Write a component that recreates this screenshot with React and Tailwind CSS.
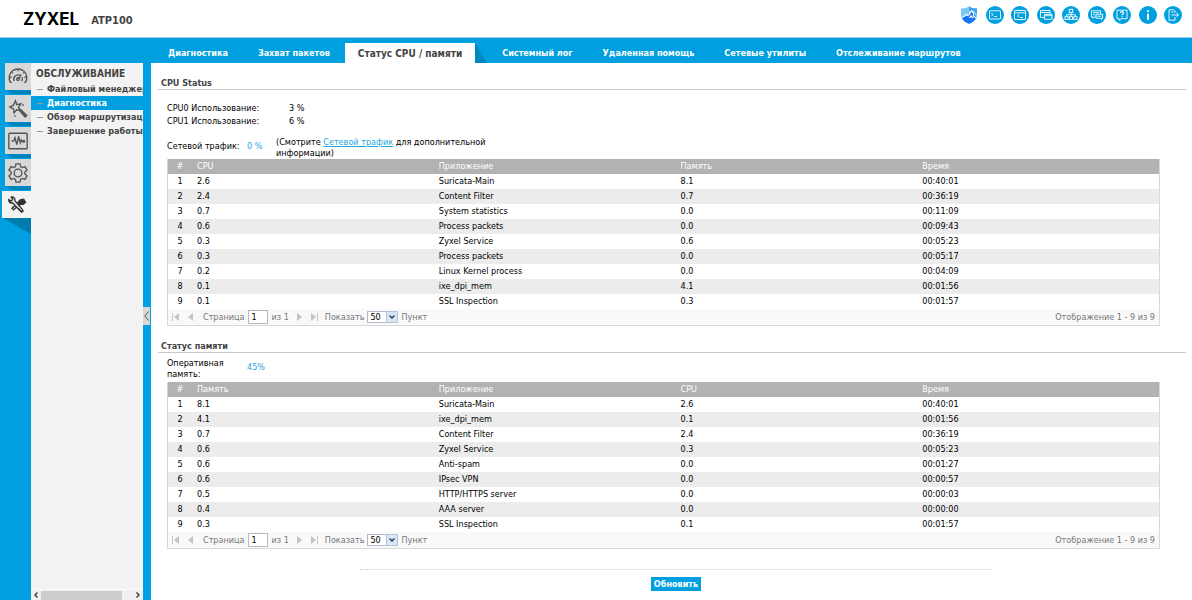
import React, { useState } from "react";

const cpuRows = [
    ["2.6", "Suricata-Main", "8.1", "00:40:01"],
    ["2.4", "Content Filter", "0.7", "00:36:19"],
    ["0.7", "System statistics", "0.0", "00:11:09"],
    ["0.6", "Process packets", "0.0", "00:09:43"],
    ["0.3", "Zyxel Service", "0.6", "00:05:23"],
    ["0.3", "Process packets", "0.0", "00:05:17"],
    ["0.2", "Linux Kernel process", "0.0", "00:04:09"],
    ["0.1", "ixe_dpi_mem", "4.1", "00:01:56"],
    ["0.1", "SSL Inspection", "0.3", "00:01:57"],
]

const memoryRows = [
    ["8.1", "Suricata-Main", "2.6", "00:40:01"],
    ["4.1", "ixe_dpi_mem", "0.1", "00:01:56"],
    ["0.7", "Content Filter", "2.4", "00:36:19"],
    ["0.6", "Zyxel Service", "0.3", "00:05:23"],
    ["0.6", "Anti-spam", "0.0", "00:01:27"],
    ["0.6", "IPsec VPN", "0.0", "00:00:57"],
    ["0.5", "HTTP/HTTPS server", "0.0", "00:00:03"],
    ["0.4", "AAA server", "0.0", "00:00:00"],
    ["0.3", "SSL Inspection", "0.1", "00:01:57"],
]

const tabs = [
    "Диагностика",
    "Захват пакетов",
    "Статус CPU / памяти",
    "Системный лог",
    "Удаленная помощь",
    "Сетевые утилиты",
    "Отслеживание маршрутов",
]

const menu = ["Файловый менеджер", "Диагностика", "Обзор маршрутизации", "Завершение работы"]

const headerIcons = [
    { name: "CLI", icon: <><rect x="3.5" y="4.8" width="11" height="8.2" rx="0.5" /><path d="M5.3 7l1.8 1.500L5.300 10M8 10.500h3" /></> },
    { name: "Web Console", icon: <><rect x="3.5" y="4.5" width="11" height="9" rx="0.5" /><path d="M3.500 6.800h11M8.300 8.300L6.500 9.800l1.800 1.500M9.300 11.500h2.500" /></> },
    { name: "Reference", icon: <><path d="M7.500 11.500h-4v-7h9.500v3.500M3.500 6.500h9.500" /><path d="M7.500 8.300h7.500v5H7.500zM7.500 9.700h7.500" /></> },
    { name: "Site Map", icon: <><rect x="7.200" y="3.300" width="3.600" height="3.200" /><rect x="3" y="10.700" width="3.200" height="2.800" /><rect x="7.400" y="10.700" width="3.200" height="2.800" /><rect x="11.800" y="10.700" width="3.200" height="2.800" /><path d="M9 6.500v4.200M4.600 10.700V8.700h8.800v2" /></> },
    { name: "Forum", icon: <><path d="M7.500 11H6l-1.200 1.300V11H3.500V4.800h9V8" /><path d="M5 6.700h6M5 8.700h2M8 8.200h6.700v4h-1.200v1.300L12.200 12.200H8zM9.300 10.200h4" /></> },
    { name: "Help", icon: <><path d="M4 4.200h10v8.500H8.200l-2 1.800v-1.800H4z" /><path strokeWidth="1.200" d="M7.500 7c0-1.800 3-1.800 3 0 0 1-1.500 1-1.500 2.200M9 10.300v1" /></> },
    { name: "About", icon: <><path strokeWidth="2" d="M9 7.500v6.200M9 4.200v1.900" /></> },
    { name: "Logout", icon: <><path d="M11 7V5L9.500 3.800H5v10.400h6V11M7.500 9h6.800M12.300 7L14.500 9l-2.200 2M7 6h2.500" /></> },
]

const sideIcons = [
    {
        name: "Dashboard",
        icon: <>
            <path d="M5.200 17.800H3.800a9.600 9.600 0 1 1 16.400 0h-1.400" />
            <path d="M7.800 16.5a4.800 4.800 0 0 1 6-6.5M16.4 12.3a4.8 4.8 0 0 1-.2 4.2M15.5 9.2L13 13.4" />
            <circle cx="12" cy="14.3" r="1.5" />
            <path d="M5 12.3H3.2M6.5 8L5.3 7M12 5.7V4.2M17.5 8l1.2-1M19 12.3h1.8" />
        </>,
    },
    {
        name: "Wizard",
        icon: <>
            <path d="M9.200 3l1.500 4.200 4.300-.9-2.400 3.700 2 3.200-4-.3-2.900 3.400-.6-4.400-4-2.100 4-2z" />
            <path d="M13.200 13.200l6.500 7.500 1.800-1.700-6.900-6.800M14.500 14.500l6 5.500M16.500 8l1.800-.8M8.500 18.800l.3 1.500" />
        </>,
    },
    {
        name: "Monitor",
        icon: <>
            <rect x="2" y="3.500" width="20" height="17" rx="1" />
            <path d="M5 12h2.300l1.400-3.500 2 7.500 2-9 1.800 7 1.300-3 .8 1.500h1" />
            <circle cx="18.3" cy="12.2" r=".9" />
        </>,
    },
    {
        name: "Configuration",
        icon: <>
            <path d="M9.800 2h4.400l.6 3 1.900 1.100 2.900-1 2.200 3.800-2.300 2v2.200l2.300 2-2.200 3.800-2.900-1-1.900 1.100-.6 3H9.800l-.6-3-1.900-1.100-2.900 1-2.200-3.800 2.300-2v-2.200l-2.300-2 2.200-3.800 2.900 1L9.200 5z" />
            <circle cx="12" cy="12" r="4.200" />
        </>,
    },
    {
        name: "Maintenance",
        icon: <>
            <path d="M3 6.200l2.500 1.600L7.300 6 5.700 3.400c2.800-.6 4.600 1.500 3.900 3.800l8.200 9.500c1 1.500-.7 3.100-2.200 1.900L7.200 9.700C4.800 10.400 2.800 8.600 3 6.200z" />
            <path fill="currentColor" d="M13 9.300l2.500-2.800 3.800-.7 2 3.200-2.500 2.200-2.800-.2-1.500 1.500z" />
            <path d="M9.800 12.700l-3.300 2.800 1.600 1.800 3.300-2.800M13.500 15.500l3.500 4.300 2.200-1.600" />
        </>,
    },
]

function Pager({ id }) {
    const [page, setPage] = useState("1")
    const [size, setSize] = useState("50")

    return (
        <div className="flex items-center h-4 bg-[#f9f9f9] text-[#777] px-1">
            <button aria-label="First page" className="w-[15px]">
                <svg className="w-2 h-2" viewBox="0 0 8 8" fill="#c4c4c4"><path d="M0 0h1v8H0zM7 0v8L2 4z" /></svg>
            </button>
            <button aria-label="Previous page" className="w-4">
                <svg className="w-2 h-2" viewBox="0 0 8 8" fill="#c4c4c4"><path d="M6 0v8L1 4z" /></svg>
            </button>
            <label htmlFor={`${id}-page`}>Страница</label>
            <input
                id={`${id}-page`}
                className="w-5 h-[14px] ml-[3px] mr-1 px-[3px] border border-[#b5b8c8] bg-white text-black"
                value={page}
                onChange={(e) => setPage(e.target.value)}
            />
            <span>из 1</span>
            <button aria-label="Next page" className="w-[15px] ml-1.5">
                <svg className="w-2 h-2" viewBox="0 0 8 8" fill="#c4c4c4"><path d="M2 0v8l5-4z" /></svg>
            </button>
            <button aria-label="Last page" className="w-[15px]">
                <svg className="w-2 h-2" viewBox="0 0 8 8" fill="#c4c4c4"><path d="M1 0v8l5-4zM7 0h1v8H7z" /></svg>
            </button>
            <label htmlFor={`${id}-size`}>Показать</label>
            <div className="relative w-[31px] h-3 mx-[3px]">
                <select
                    id={`${id}-size`}
                    className="block w-full h-full pl-0.5 appearance-none border border-[#b5b8c8] bg-white text-black leading-[10px]"
                    value={size}
                    onChange={(e) => setSize(e.target.value)}
                >
                    <option>50</option>
                    <option>100</option>
                </select>
                <span className="absolute right-0 top-0 flex items-center justify-center w-3 h-3 border border-[#b5c4dc] bg-[#dbe6f3] pointer-events-none">
                    <svg className="w-1.5 h-1" viewBox="0 0 6 4" fill="none" stroke="#2b4468" strokeWidth="1.5"><path d="M.5.5L3 3 5.500.5" /></svg>
                </span>
            </div>
            <span>Пункт</span>
            <span className="ml-auto">Отображение 1 - 9 из 9</span>
        </div>
    )
}

function StatusTable({ id, columns, rows }) {
    return (
        <div className="border-x border-b border-[#d8d8d8]">
            <table className="w-full table-fixed border-collapse text-left">
                <thead>
                    <tr className="h-[15px] bg-[#b2b2b2] text-white">
                        <th className="w-6 p-0 font-normal text-center">#</th>
                        {columns.map((column) => (
                            <th key={column} className="p-0 pl-[5px] font-normal">{column}</th>
                        ))}
                    </tr>
                </thead>
                <tbody>
                    {rows.map((row, index) => (
                        <tr key={index} className="h-[15px] even:bg-[#ececec]">
                            <td className="p-0 text-center">{index + 1}</td>
                            {row.map((cell, i) => (
                                <td key={i} className="p-0 pl-[5px]">{cell}</td>
                            ))}
                        </tr>
                    ))}
                </tbody>
            </table>
            <Pager id={id} />
        </div>
    )
}

function SectionTitle({ children }) {
    return (
        <h2 className="mt-[13px] h-[14px] pl-[3px] border-b border-[#c8c8c8] font-bold text-[#444] leading-[14px]">{children}</h2>
    )
}

function Header() {
    return (
        <header className="flex justify-between h-[38px] pl-[23px] pr-2.5 bg-white border-b border-[#8fd3f0]">
            <div className="flex items-center gap-3 pt-0.5">
                <span className="font-[Inter] font-bold text-[17px] leading-none text-black">ZYXEL</span>
                <span className="font-bold text-[11px] text-[#444] mt-0.5">ATP100</span>
            </div>
            <div className="flex items-start justify-between w-[222px] pt-1.5">
                <button aria-label="SecuReporter">
                    <svg className="block w-[18px] h-[18px]" viewBox="0 0 18 18">
                        <path fill="#7cc8f5" d="M1 2.500C4 2.800 7 2 9 .3c2 1.700 5 2.500 8 2.200V8c0 5-3.500 8-8 9.700C4.500 16 1 13 1 8z" />
                        <path fill="#3d9ff2" d="M9 .3c2 1.700 5 2.500 8 2.200V8l-2.500-3L12 4 9 6z" />
                        <path fill="#1673f0" d="M1.800 12L6.500 8.500l2 1.500L11 6l2.500 1 3 4.500c-1.500 3.200-4 5-7.500 6.200-3.300-1.200-5.800-3-7.200-5.700z" />
                        <path fill="none" stroke="#fff" strokeWidth="1.200" d="M2.500 11.500L6.500 8.500l2 1.500M9.500 9c0-5 4-5 4-1v2l2.500 2M9.500 12l1.500-2 2 2" />
                    </svg>
                </button>
                {headerIcons.map((item) => (
                    <button key={item.name} aria-label={item.name} className="rounded-full bg-[#009fe0]">
                        <svg className="block w-[18px] h-[18px]" viewBox="0 0 18 18" fill="none" stroke="#fff" strokeWidth="0.900">{item.icon}</svg>
                    </button>
                ))}
            </div>
        </header>
    )
}

function Sidebar() {
    return (
        <aside className="flex w-[151px] shrink-0">
            <div className="flex flex-col items-end gap-[5px] w-[31px]">
                {sideIcons.map((item) => {
                    const active = item.name === "Maintenance"
                    return (
                        <div key={item.name} className="relative">
                            <button
                                aria-label={item.name}
                                className={`flex items-center justify-center h-[27px] ${
                                    active ? "w-[29px] bg-[#f3f3f3] text-[#333]" : "w-[26px] bg-[#d8d8d8] text-[#555]"
                                }`}
                            >
                                <svg className="w-[22px] h-[22px]" viewBox="0 0 24 24" fill="none" stroke="currentColor" strokeWidth="1.500">{item.icon}</svg>
                            </button>
                            {active ? (
                                <svg className="absolute top-full right-0 w-[28px] h-4" viewBox="0 0 28 16"><path fill="#007bae" d="M0 0h28v16z" /></svg>
                            ) : (
                                <svg className="absolute top-full right-0 w-[25px] h-1" viewBox="0 0 25 4"><path fill="#0086bd" d="M0 0h25v4H5z" /></svg>
                            )}
                        </div>
                    )
                })}
            </div>
            <div className="flex flex-col w-28 bg-[#f3f3f3] overflow-hidden">
                <h1 className="mt-[3px] pl-[5px] h-4 leading-4 font-bold text-[10px] text-[#444]">ОБСЛУЖИВАНИЕ</h1>
                <ul className="font-bold">
                    {menu.map((item) => (
                        <li key={item} className={item === "Диагностика" ? "bg-[#009fe0] text-white" : "text-[#444]"}>
                            <a href="#" className="flex items-center h-[14px] pl-1.5 whitespace-nowrap">
                                <span className="w-[6px] h-px mr-1 bg-[#999] shrink-0"></span>
                                {item}
                            </a>
                        </li>
                    ))}
                </ul>
                <div className="flex items-center h-[11px] mt-auto px-[3px] bg-[#f0f0f0] border-t border-[#fafafa]">
                    <button aria-label="Scroll left">
                        <svg className="block w-1 h-1.5" viewBox="0 0 4 6" fill="none" stroke="#444" strokeWidth="1.500"><path d="M3.500.5L1 3l2.500 2.500" /></svg>
                    </button>
                    <div className="w-[81px] h-[9px] ml-[3px] bg-[#cdcdcd]"></div>
                    <button aria-label="Scroll right" className="ml-auto">
                        <svg className="block w-1 h-1.5" viewBox="0 0 4 6" fill="none" stroke="#444" strokeWidth="1.500"><path d="M.5.5L3 3 .5 5.500" /></svg>
                    </button>
                </div>
            </div>
            <div className="w-2 pt-[244px]">
                <button aria-label="Collapse menu" className="flex items-center justify-center w-[7px] h-[18px] bg-[#d8d8d8]">
                    <svg className="w-[5px] h-2.5" viewBox="0 0 5 10" fill="none" stroke="#555" strokeWidth="1"><path d="M4.500.5L.8 5l3.700 4.500" /></svg>
                </button>
            </div>
        </aside>
    )
}

export default function App() {
    const [activeTab, setActiveTab] = useState("Статус CPU / памяти")

    return (
        <div className="flex flex-col min-h-screen bg-[#009fe0] font-['DejaVu_Sans_Condensed','DejaVu_Sans',sans-serif] text-[9px] leading-[13px] text-black">
            <Header />
            <nav className="flex items-end h-[25px] pl-[153px] font-bold whitespace-nowrap">
                {tabs.map((tab) => (
                    <button
                        key={tab}
                        onClick={() => setActiveTab(tab)}
                        className={`relative h-5 ${
                            activeTab === tab ? "px-[13px] mr-3 bg-white text-[#444] text-[10px]" : "px-[15px] text-white"
                        }`}
                    >
                        {tab}
                        {activeTab === tab && (
                            <svg className="absolute left-full top-0 w-3 h-5" viewBox="0 0 12 20"><path fill="#0088c0" d="M0 0l12 20H0z" /></svg>
                        )}
                    </button>
                ))}
            </nav>
            <div className="flex grow">
                <Sidebar />
                <main className="grow bg-white pl-[7px] pr-1.5">
                    <section>
                        <SectionTitle>CPU Status</SectionTitle>
                        <div className="pl-[9px] pr-[26px]">
                            <dl className="grid grid-cols-[122px_1fr] mt-3">
                                <dt>CPU0 Использование:</dt>
                                <dd>3 %</dd>
                                <dt>CPU1 Использование:</dt>
                                <dd>6 %</dd>
                            </dl>
                            <div className="flex mt-[9px]">
                                <span className="w-20 leading-[18px]">Сетевой трафик:</span>
                                <span className="w-[29px] leading-[18px] text-[#1fa8e0]">0 %</span>
                                <p className="w-[220px] leading-[11px]">
                                    (Смотрите <a href="#" className="underline text-[#1fa8e0]">Сетевой трафик</a> для дополнительной информации)
                                </p>
                            </div>
                            <StatusTable id="cpu" columns={["CPU", "Приложение", "Память", "Время"]} rows={cpuRows} />
                        </div>
                    </section>
                    <section>
                        <SectionTitle>Статус памяти</SectionTitle>
                        <div className="pl-[9px] pr-[26px]">
                            <div className="flex mt-[5px] mb-0.5">
                                <span className="w-20 leading-[11px]">Оперативная память:</span>
                                <span className="leading-[18px] text-[#1fa8e0]">45%</span>
                            </div>
                            <StatusTable id="memory" columns={["Память", "Приложение", "CPU", "Время"]} rows={memoryRows} />
                        </div>
                    </section>
                    <div className="flex flex-col items-center pl-2">
                        <div className="w-[62%] mt-5 mb-[7px] border-t border-dotted border-[#ccc]"></div>
                        <button className="h-[14px] px-[3px] bg-[#009fe0] text-white font-bold">Обновить</button>
                    </div>
                </main>
            </div>
        </div>
    )
}
